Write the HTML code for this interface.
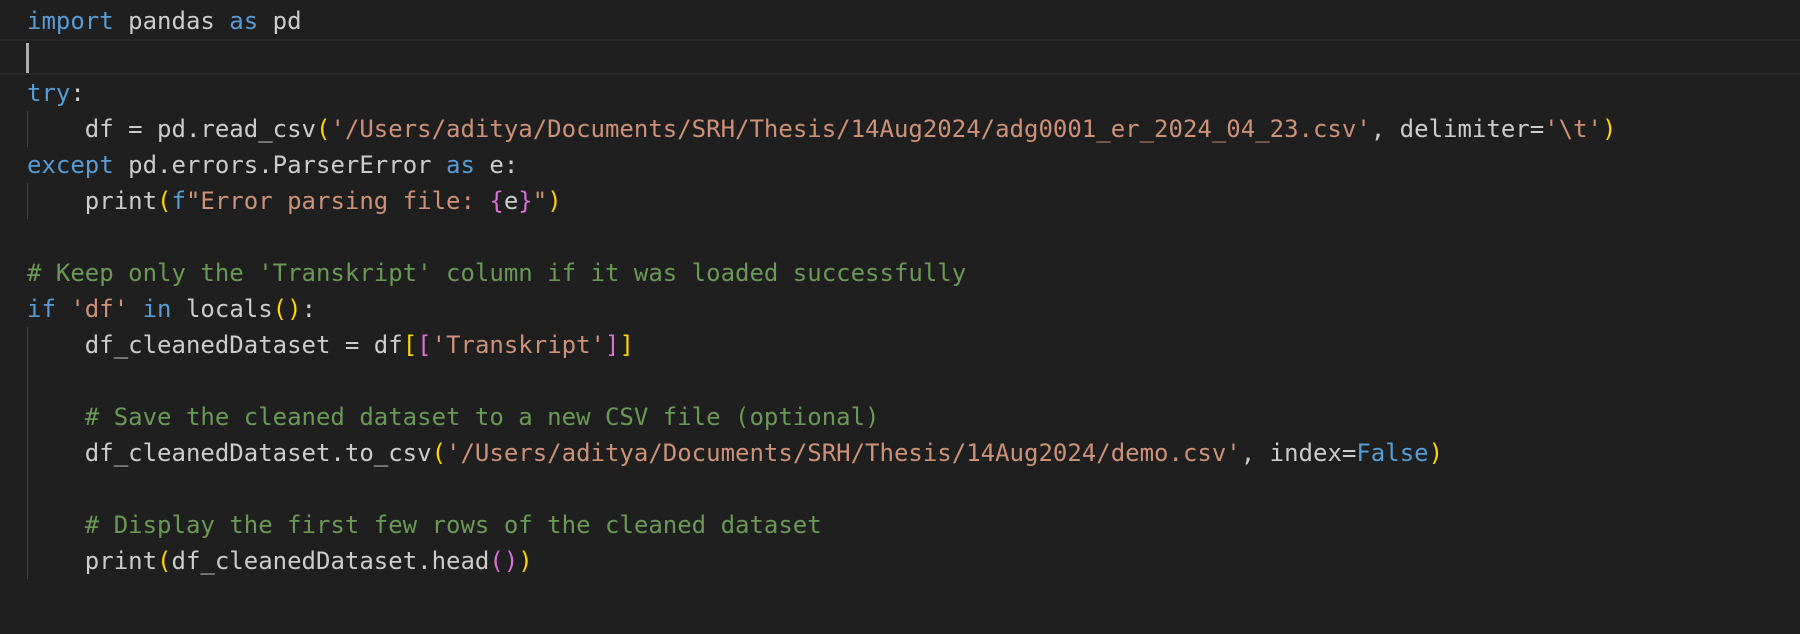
<!DOCTYPE html>
<html><head><style>
body{margin:0;background:#1f1f1f;width:1800px;height:634px;overflow:hidden}
.ed{position:absolute;left:0;top:3px;width:1800px;font-family:"DejaVu Sans Mono","Liberation Mono",monospace;font-size:24px;line-height:36px;color:#cccccc}
.l{height:36px;padding-left:27px;position:relative;white-space:pre}
.k{color:#569cd6}.s{color:#ce9178}.c{color:#6a9955}.y{color:#ffd700}.p{color:#da70d6}
.cur{border-top:2px solid #282828;border-bottom:2px solid #282828;box-sizing:border-box}
.cursor{position:absolute;left:26px;top:2px;width:3px;height:30px;background:#aeafad}
.g{position:absolute;left:27px;top:0;width:1px;height:36px;background:#404040}
</style></head><body><div class="ed">
<div class="l"><span class="k">import</span> pandas <span class="k">as</span> pd</div>
<div class="l cur"><div class="cursor"></div></div>
<div class="l"><span class="k">try</span>:</div>
<div class="l"><div class="g"></div>    df = pd.read_csv<span class="y">(</span><span class="s">'/Users/aditya/Documents/SRH/Thesis/14Aug2024/adg0001_er_2024_04_23.csv'</span>, delimiter=<span class="s">'\t'</span><span class="y">)</span></div>
<div class="l"><span class="k">except</span> pd.errors.ParserError <span class="k">as</span> e:</div>
<div class="l"><div class="g"></div>    print<span class="y">(</span><span class="k">f</span><span class="s">"Error parsing file: </span><span class="p">{</span>e<span class="p">}</span><span class="s">"</span><span class="y">)</span></div>
<div class="l"></div>
<div class="l"><span class="c"># Keep only the 'Transkript' column if it was loaded successfully</span></div>
<div class="l"><span class="k">if</span> <span class="s">'df'</span> <span class="k">in</span> locals<span class="y">()</span>:</div>
<div class="l"><div class="g"></div>    df_cleanedDataset = df<span class="y">[</span><span class="p">[</span><span class="s">'Transkript'</span><span class="p">]</span><span class="y">]</span></div>
<div class="l"><div class="g"></div></div>
<div class="l"><div class="g"></div>    <span class="c"># Save the cleaned dataset to a new CSV file (optional)</span></div>
<div class="l"><div class="g"></div>    df_cleanedDataset.to_csv<span class="y">(</span><span class="s">'/Users/aditya/Documents/SRH/Thesis/14Aug2024/demo.csv'</span>, index=<span class="k">False</span><span class="y">)</span></div>
<div class="l"><div class="g"></div></div>
<div class="l"><div class="g"></div>    <span class="c"># Display the first few rows of the cleaned dataset</span></div>
<div class="l"><div class="g"></div>    print<span class="y">(</span>df_cleanedDataset.head<span class="p">()</span><span class="y">)</span></div>
</div></body></html>
